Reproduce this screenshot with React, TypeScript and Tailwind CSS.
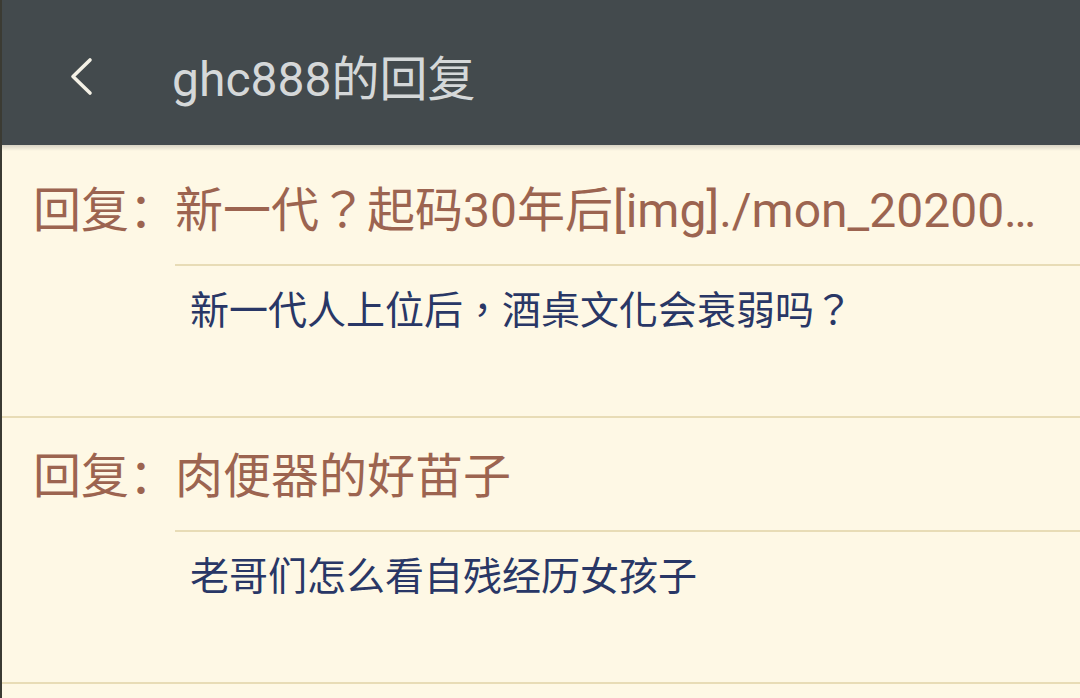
import React from 'react';

const replies = [
  {
    id: 1,
    title: '新一代？起码30年后[img]./mon_202008/12/-7Q5-abcdK2dT3cS1hc-u0.jpg[/img]',
    body: '新一代人上位后，酒桌文化会衰弱吗？',
  },
  {
    id: 2,
    title: '肉便器的好苗子',
    body: '老哥们怎么看自残经历女孩子',
  },
];

const sc = "font-['Roboto','Noto_Sans_CJK_SC',sans-serif]";
const tc = "font-['Roboto','Noto_Sans_CJK_TC',sans-serif]";

export default function App() {
  return (
    <div className={`${sc} w-[1080px] h-[698px] overflow-hidden bg-[#fef8e5] border-l-2 border-[#3b3b33] flex flex-col`}>
      <header className="relative h-[145px] shrink-0 bg-[#434a4d] flex items-center">
        <button className="ml-[66px] mt-[6px] w-[28px] h-[40px] flex items-center justify-center">
          <svg width="26" height="40" viewBox="0 0 26 40" fill="none">
            <polyline
              points="21,4 4,20.5 21,37"
              stroke="#f4f1e6"
              strokeWidth="3.6"
              strokeLinecap="round"
              strokeLinejoin="round"
            />
          </svg>
        </button>
        <h1 className="ml-[76px] mt-[14px] text-[48px] leading-[56px] text-[#d5d8d9]">ghc888的回复</h1>
        <div className="absolute left-0 right-0 top-full h-[6px] bg-gradient-to-b from-black/15 to-transparent" />
      </header>

      <div className="pt-[7px]">
        {replies.map((r) => (
          <div key={r.id} className="flex pl-[31px] pt-[31px] pb-[82px] border-b-2 border-[#e8dcb6]">
            <span className="shrink-0 w-[142px] whitespace-nowrap text-[48px] leading-[56px] text-[#9c6450]">回复：</span>
            <div className={`${tc} flex-1 min-w-0`}>
              <div className="pr-[30px] text-[48px] leading-[56px] text-[#9c6450] truncate">{r.title}</div>
              <div className="mt-[25px] h-[2px] bg-[#e8dcb6]" />
              <p className="mt-[22px] pl-[15px] text-[39px] leading-[46px] text-[#293766]">{r.body}</p>
            </div>
          </div>
        ))}
      </div>
    </div>
  );
}
